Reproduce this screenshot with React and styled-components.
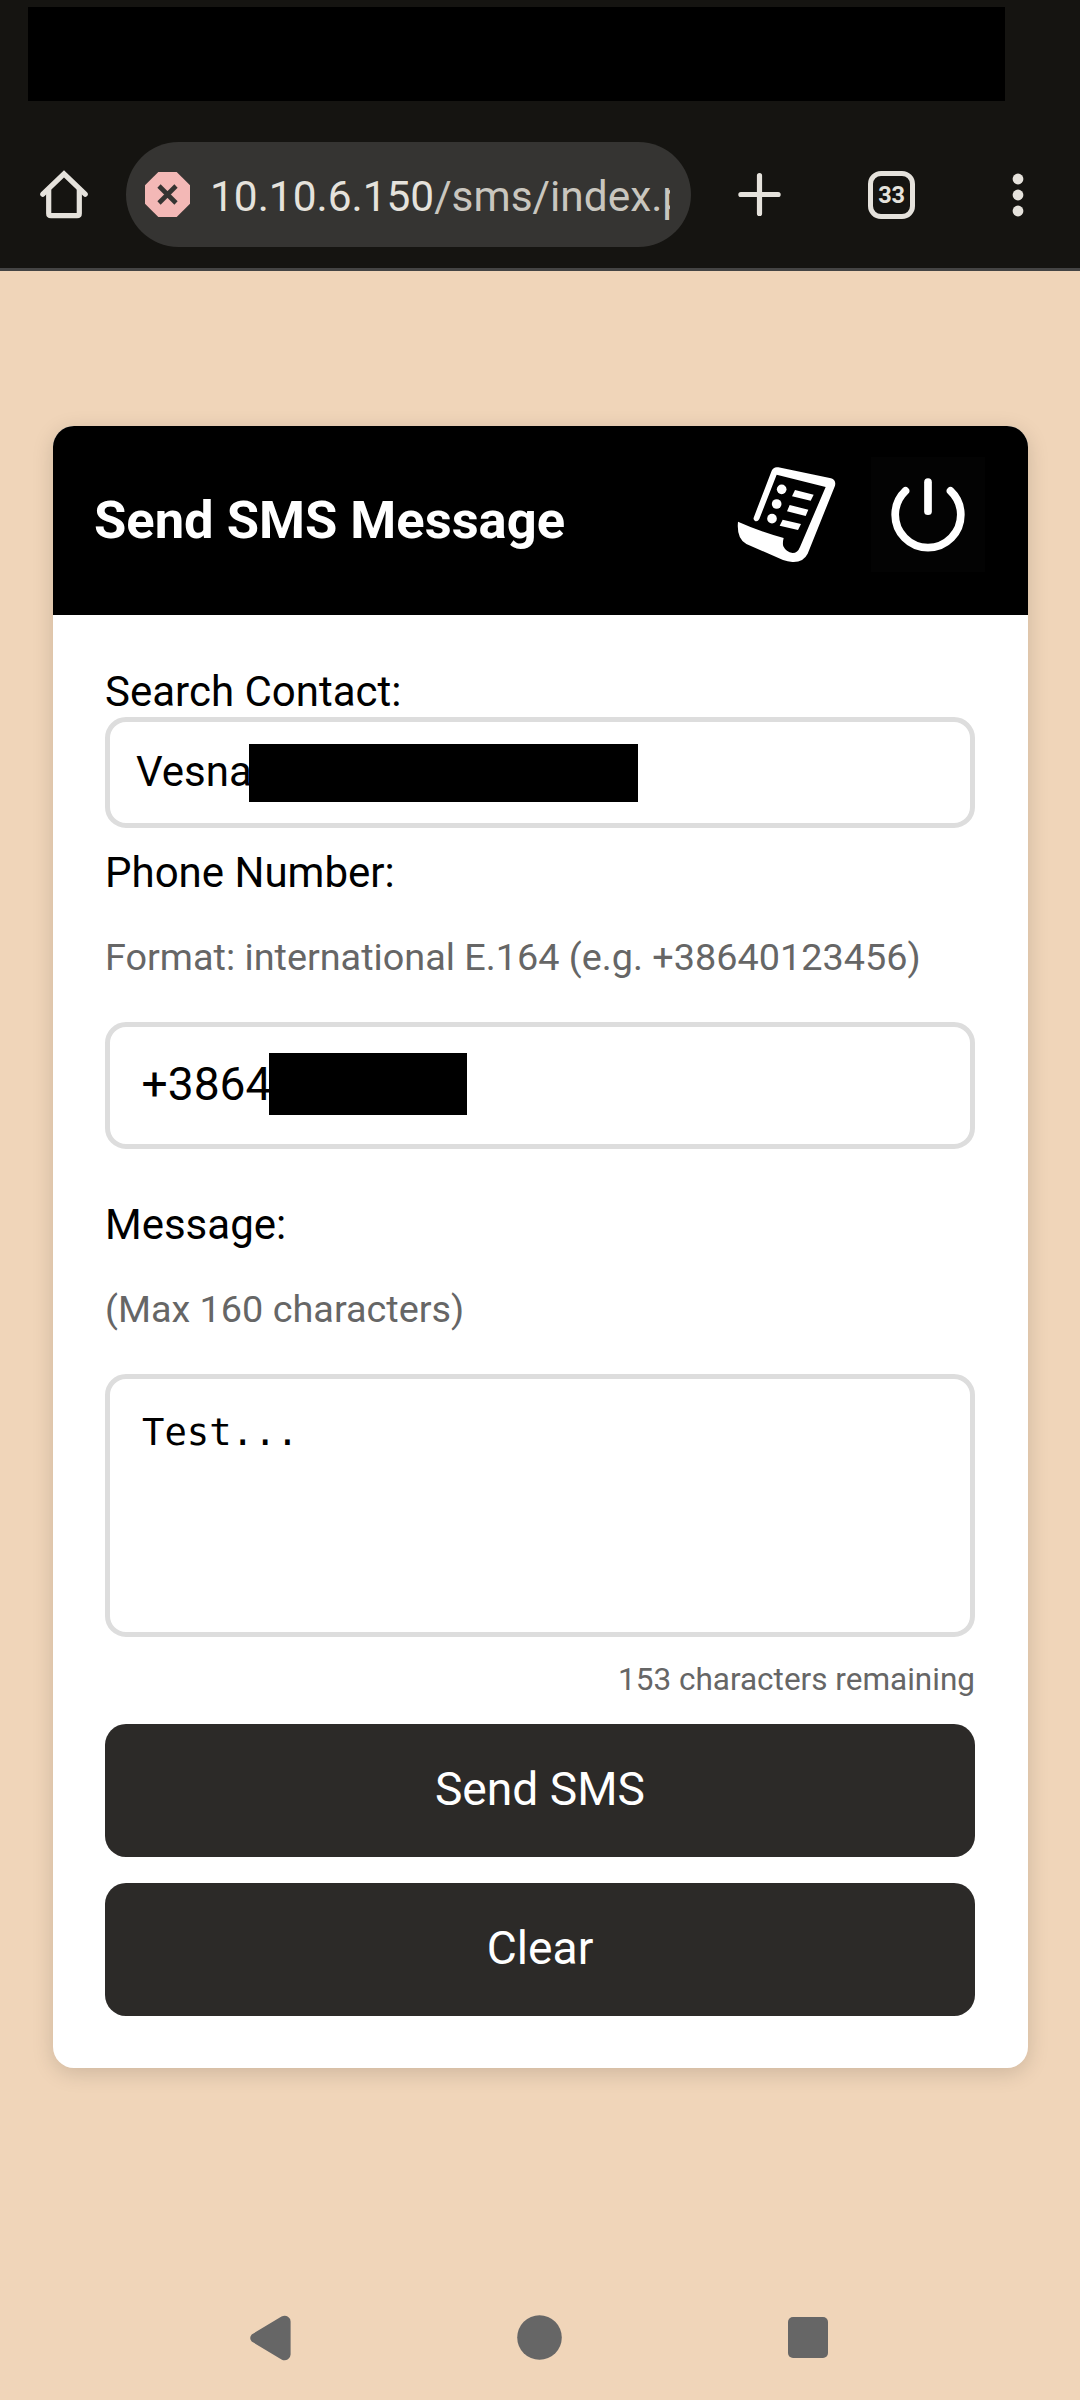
import React from "react";
import styled, { createGlobalStyle } from "styled-components";

const GlobalStyle = createGlobalStyle`
  *, *::before, *::after { box-sizing: border-box; }
  body {
    margin: 0;
    background: #f0d5b9;
    font-family: Roboto, "Liberation Sans", sans-serif;
    color: #000;
  }
`;

const Screen = styled.div`
  display: flex;
  flex-direction: column;
  width: 1080px;
  height: 2400px;
  background: #f0d5b9;
  overflow: hidden;
`;

const BrowserChrome = styled.header`
  display: flex;
  flex-direction: column;
  height: 271px;
  flex: none;
  background: #151411;
  border-bottom: 3px solid #444444;
`;

const StatusBar = styled.div`
  height: 142px;
  padding: 7px 75px 41px 28px;
`;

const StatusMask = styled.div`
  height: 94px;
  background: #000;
`;

const Toolbar = styled.div`
  display: flex;
  align-items: center;
  height: 105px;
`;

const ToolButton = styled.button`
  display: flex;
  align-items: center;
  justify-content: center;
  width: ${(p) => p.$width}px;
  height: 105px;
  padding: 0;
  border: 0;
  background: none;
  color: #e5e2dc;
`;

const AddressBar = styled.div`
  display: flex;
  align-items: center;
  width: 565px;
  height: 105px;
  padding: 0 21px 0 19px;
  border-radius: 53px;
  background: #353432;
`;

const Url = styled.div`
  flex: 1;
  margin-left: 20px;
  padding-top: 4px;
  overflow: hidden;
  white-space: nowrap;
  font-size: 42.4px;
  line-height: 56px;
  color: #c9c6bf;
`;

const Host = styled.span`
  color: #e5e2dc;
`;

const TabCount = styled.span`
  display: flex;
  align-items: center;
  justify-content: center;
  width: 47px;
  height: 48px;
  border: 5px solid #e5e2dc;
  border-radius: 13px;
  font-family: Roboto, sans-serif;
  font-size: 23.5px;
  line-height: 28px;
  font-weight: 700;
  letter-spacing: -0.3px;
`;

const Page = styled.main`
  flex: 1;
  padding: 155px 52px 0 53px;
`;

const Card = styled.section`
  height: 1642px;
  border-radius: 21px;
  background: #fff;
  box-shadow: 0 5px 21px rgba(0, 0, 0, 0.15);
  overflow: hidden;
`;

const CardHeader = styled.div`
  display: flex;
  align-items: flex-start;
  gap: 28px;
  height: 189px;
  padding: 31px 43px 0 41px;
  background: #000;
`;

const Title = styled.h1`
  flex: 1;
  margin: 33px 0 0;
  color: #fff;
  font-size: 52.5px;
  line-height: 61px;
  font-weight: 700;
  white-space: nowrap;
`;

const HeaderAction = styled.button`
  display: flex;
  align-items: center;
  justify-content: center;
  width: 114px;
  height: 115px;
  padding: 0;
  border: 0;
  background: ${(p) => (p.$raised ? "#030303" : "#000")};
`;

const Form = styled.div`
  display: flex;
  flex-direction: column;
  padding: 52px 53px 52px 52px;
`;

const Label = styled.label`
  margin-top: ${(p) => p.$gap || 0}px;
  font-size: 42px;
  line-height: 49px;
`;

const Hint = styled.p`
  margin: 39px 0 43px;
  font-size: 37.8px;
  line-height: 43px;
  color: #666;
  white-space: nowrap;
`;

const Field = styled.div`
  display: flex;
  align-items: flex-start;
  height: ${(p) => p.$height}px;
  margin-top: ${(p) => p.$gap || 0}px;
  border: 5px solid #ddd;
  border-radius: 21px;
  background: #fff;
`;

const ContactValue = styled.span`
  width: 139px;
  padding: 25px 0 0 26px;
  font-size: 42px;
  line-height: 49px;
  white-space: nowrap;
`;

const PhoneValue = styled.span`
  width: 159px;
  padding: 30px 0 0 31.5px;
  font-size: 46.2px;
  line-height: 54px;
  white-space: nowrap;
`;

const Mask = styled.span`
  width: ${(p) => p.$width}px;
  height: ${(p) => p.$height}px;
  margin-top: ${(p) => p.$top}px;
  background: #000;
`;

const MessageValue = styled.span`
  padding: 32px 32px 0;
  font-family: "DejaVu Sans Mono", "Liberation Mono", monospace;
  font-size: 37.2px;
  line-height: 43px;
`;

const Counter = styled.p`
  margin: 24px 0 0;
  text-align: right;
  font-size: 31.5px;
  line-height: 37px;
  color: #666;
`;

const ActionButton = styled.button`
  height: 133px;
  margin-top: 26px;
  padding: 0 0 3px;
  border: 0;
  border-radius: 21px;
  background: #2c2a28;
  color: #fff;
  font-family: Roboto, sans-serif;
  font-size: 46.2px;
  line-height: 54px;
`;

const NavBar = styled.nav`
  display: flex;
  align-items: center;
  justify-content: space-between;
  height: 125px;
  flex: none;
  padding: 0 252px 0 250px;
`;

const HomeIcon = () => (
  <svg width="50" height="49" viewBox="-1 0 48 49" fill="none" stroke="currentColor" strokeWidth="5.2" strokeLinecap="round" strokeLinejoin="round">
    <path d="M2.8 24.2 24 3.8l21.2 20.4" strokeLinejoin="miter" />
    <path d="M8.7 20v23.4q0 2.2 2.2 2.2h26.2q2.2 0 2.2-2.2V20" />
  </svg>
);

const UnsafeIcon = () => (
  <svg width="45" height="45" viewBox="0 0 45 45">
    <path d="M13.3 0h18.4L45 13.3v18.4L31.7 45H13.3L0 31.7V13.3z" fill="#f3b8b6" />
    <path d="m14 14 17 17m0-17L14 31" stroke="#353432" strokeWidth="4.6" />
  </svg>
);

const PlusIcon = () => (
  <svg width="43" height="43" viewBox="0 0 43 43" stroke="currentColor" strokeWidth="5.2" strokeLinecap="round">
    <path d="M21.5 2.6v37.8M2.9 21.5h37.2" />
  </svg>
);

const MoreIcon = () => (
  <svg width="12" height="46" viewBox="0 0 12 46" fill="currentColor">
    <circle cx="6" cy="7" r="5.4" />
    <circle cx="6" cy="23" r="5.4" />
    <circle cx="6" cy="39" r="5.4" />
  </svg>
);

const LogIcon = () => (
  <svg width="114" height="115" viewBox="86 142 342 345" fill="#fff">
    <path d="M160 324 214 183Q220 170 234 173L392 206Q408 211 404 228L322 432Q308 459 276 457Q262 456 248 451L138 403Q108 388 113 336Q180 366 250 385Q246 400 249 410Q257 427 277 430Q292 430 299 412L376 232 229 195 177 328Q172 337 164 334Q158 330 160 324Z" />
    <circle cx="244" cy="239" r="14.5" />
    <circle cx="229" cy="283" r="14.5" />
    <circle cx="215" cy="327" r="14.5" />
    <path d="m284 241 56 14-9 18-56-13zM268 286l56 14-8 19-56-14zM247 330l55 13-9 18-55-13z" />
  </svg>
);

const PowerIcon = () => (
  <svg width="114" height="115" viewBox="0 0 114 115" fill="none" stroke="#fff" strokeWidth="7.7" strokeLinecap="round">
    <path d="M57 25.2v29" />
    <path d="M34.5 33.9a32.8 32.8 0 1 0 45 0" />
  </svg>
);

const BackShape = () => (
  <svg width="41" height="46" viewBox="0 0 41 46" fill="#666">
    <path d="M1.7 19.5 31.5 1.6Q35 -.3 38 1.8Q40.6 3.6 40.6 6.5V39.5Q40.6 42.4 38 44.2Q35 46.3 31.5 44.4L1.7 26.5Q-1.3 23 1.7 19.5Z" />
  </svg>
);

const HomeShape = () => (
  <svg width="45" height="45" viewBox="0 0 45 45" fill="#666">
    <circle cx="22.5" cy="22.5" r="22.3" />
  </svg>
);

const RecentShape = () => (
  <svg width="40" height="41" viewBox="0 0 40 41" fill="#666">
    <rect width="40" height="41" rx="5" />
  </svg>
);

export default function App() {
  return (
    <Screen>
      <GlobalStyle />
      <BrowserChrome>
        <StatusBar>
          <StatusMask />
        </StatusBar>
        <Toolbar>
          <ToolButton $width={126} aria-label="Home"><HomeIcon /></ToolButton>
          <AddressBar>
            <UnsafeIcon />
            <Url><Host>10.10.6.150</Host>/sms/index.php</Url>
          </AddressBar>
          <ToolButton $width={137} aria-label="New tab"><PlusIcon /></ToolButton>
          <ToolButton $width={127} aria-label="Tabs"><TabCount>33</TabCount></ToolButton>
          <ToolButton $width={125} aria-label="Menu"><MoreIcon /></ToolButton>
        </Toolbar>
      </BrowserChrome>
      <Page>
        <Card>
          <CardHeader>
            <Title>Send SMS Message</Title>
            <HeaderAction aria-label="Log"><LogIcon /></HeaderAction>
            <HeaderAction $raised aria-label="Log out"><PowerIcon /></HeaderAction>
          </CardHeader>
          <Form>
            <Label>Search Contact:</Label>
            <Field $height={111} $gap={1}>
              <ContactValue>Vesna</ContactValue>
              <Mask $width={389} $height={58} $top={22} />
            </Field>
            <Label $gap={20}>Phone Number:</Label>
            <Hint>Format: international E.164 (e.g. +38640123456)</Hint>
            <Field $height={127}>
              <PhoneValue>+3864</PhoneValue>
              <Mask $width={198} $height={62} $top={26} />
            </Field>
            <Label $gap={51}>Message:</Label>
            <Hint>(Max 160 characters)</Hint>
            <Field $height={263}>
              <MessageValue>Test...</MessageValue>
            </Field>
            <Counter>153 characters remaining</Counter>
            <ActionButton>Send SMS</ActionButton>
            <ActionButton>Clear</ActionButton>
          </Form>
        </Card>
      </Page>
      <NavBar>
        <BackShape />
        <HomeShape />
        <RecentShape />
      </NavBar>
    </Screen>
  );
}
